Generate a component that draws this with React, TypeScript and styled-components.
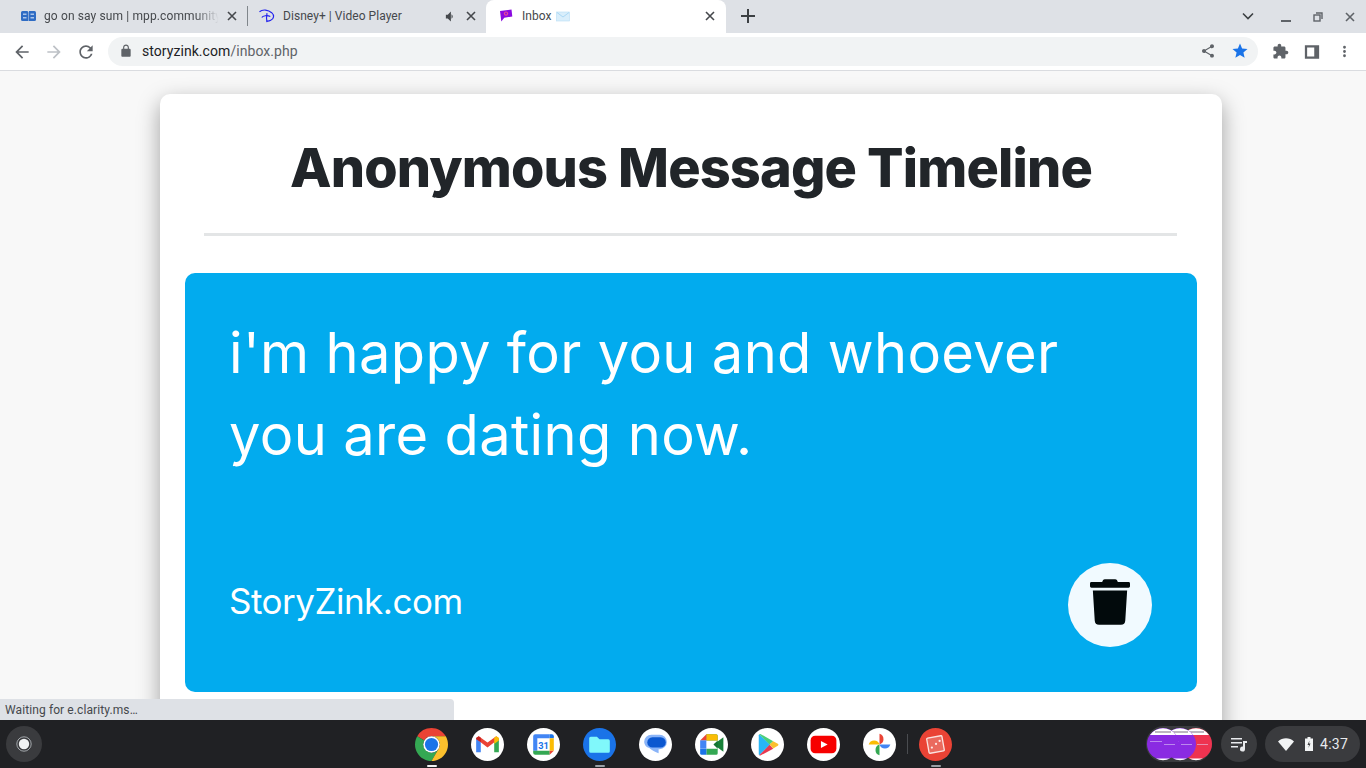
import React from 'react';
import styled, { createGlobalStyle } from 'styled-components';
import { FaTrash } from 'react-icons/fa';

const Global = createGlobalStyle`
  html, body { margin: 0; padding: 0; height: 100%; overflow: hidden; }
  body { font-family: Roboto, "Liberation Sans", sans-serif; background: #f8f8f8; }
  * { box-sizing: border-box; }
`;

const S = {
  Screen: styled.div`
    display: flex;
    flex-direction: column;
    width: 1366px;
    height: 768px;
    overflow: hidden;
  `,
  TabStrip: styled.div`
    display: flex;
    align-items: stretch;
    height: 33px;
    padding-left: 8px;
    background: #dee1e6;
    flex-shrink: 0;
  `,
  Tab: styled.div<{ $width: number; $inset?: number; $active?: boolean; $divider?: boolean }>`
    position: relative;
    display: flex;
    align-items: center;
    width: ${p => p.$width}px;
    padding: 0 8px 1px ${p => p.$inset ?? 12}px;
    border-radius: 8px 8px 0 0;
    background: ${p => (p.$active ? '#fff' : 'transparent')};
    &::after {
      content: '';
      display: ${p => (p.$divider ? 'block' : 'none')};
      position: absolute;
      right: 0;
      top: 6px;
      width: 1px;
      height: 20px;
      background: #80868b;
    }
  `,
  Favicon: styled.span`
    display: flex;
    align-items: center;
    justify-content: center;
    width: 16px;
    height: 16px;
    margin-right: 8px;
    flex-shrink: 0;
  `,
  TabTitle: styled.span<{ $fade?: boolean }>`
    flex: 1;
    min-width: 0;
    display: flex;
    align-items: center;
    gap: 4px;
    overflow: hidden;
    white-space: nowrap;
    font-size: 12px;
    letter-spacing: ${p => (p.$fade ? 0.12 : 0.05)}px;
    color: #45484c;
    ${p => p.$fade && 'mask-image: linear-gradient(to right, #000 84%, transparent 97%);'}
  `,
  TabIcon: styled.span<{ $left?: number; $right?: number }>`
    display: flex;
    align-items: center;
    justify-content: center;
    width: 16px;
    height: 16px;
    margin-left: ${p => p.$left ?? 0}px;
    margin-right: ${p => p.$right ?? 0}px;
    flex-shrink: 0;
  `,
  NewTab: styled.div`
    display: flex;
    align-items: center;
    justify-content: center;
    width: 20px;
    margin-left: 12px;
    padding-bottom: 1px;
  `,
  WindowControls: styled.div`
    margin-left: auto;
    display: flex;
    align-items: center;
    padding-right: 8px;
  `,
  WindowButton: styled.div<{ $gap?: number; $drop?: number }>`
    display: flex;
    align-items: center;
    justify-content: center;
    width: 16px;
    height: 16px;
    margin-left: ${p => p.$gap ?? 16}px;
    transform: translateY(${p => p.$drop ?? 0}px);
  `,
  Toolbar: styled.div`
    display: flex;
    align-items: center;
    height: 38px;
    padding: 0 0 0 12px;
    background: #fff;
    border-bottom: 1px solid #dadce0;
    flex-shrink: 0;
  `,
  NavButton: styled.div`
    display: flex;
    align-items: center;
    justify-content: center;
    width: 20px;
    height: 20px;
    margin-right: 12px;
  `,
  Omnibox: styled.div`
    display: flex;
    align-items: center;
    width: 1150px;
    height: 29px;
    margin: 0 4px 1px 0;
    padding: 0 9px 0 11px;
    border-radius: 15px;
    background: #f1f3f4;
  `,
  Url: styled.div`
    margin-left: 9px;
    font-size: 14px;
    letter-spacing: 0.06px;
    color: #202124;
    flex: 1;
  `,
  UrlPath: styled.span`
    color: #5f6368;
  `,
  OmniIcon: styled.span<{ $gap?: number }>`
    display: flex;
    margin-left: ${p => p.$gap ?? 0}px;
  `,
  ToolIcon: styled.div<{ $gap: number }>`
    display: flex;
    align-items: center;
    justify-content: center;
    width: 18px;
    height: 18px;
    margin-left: ${p => p.$gap}px;
  `,
  Viewport: styled.div`
    position: relative;
    flex: 1;
    min-height: 0;
    overflow: hidden;
    padding: 23px 144px 0 160px;
    background: #f8f8f8;
  `,
  Card: styled.div`
    height: 700px;
    padding: 0 25px;
    border-radius: 10px;
    background: #fff;
    box-shadow: 0 8px 22px rgba(0, 0, 0, 0.36);
  `,
  Title: styled.h1`
    margin: 0;
    height: 139px;
    padding-top: 40px;
    text-align: center;
    font: 800 54px/68px Inter, sans-serif;
    letter-spacing: -0.85px;
    color: #212529;
  `,
  Rule: styled.hr`
    margin: 0 20px 37px 19px;
    height: 3px;
    border: none;
    background: #e3e5e6;
  `,
  Message: styled.div`
    display: flex;
    flex-direction: column;
    height: 419px;
    padding: 39px 45px 0 44px;
    border-radius: 10px;
    background: #02abee;
    color: #fff;
  `,
  MessageText: styled.div`
    height: 251px;
    font: 400 56px/82px Inter, sans-serif;
    letter-spacing: 0.34px;
  `,
  MessageFooter: styled.div`
    display: flex;
    align-items: flex-start;
    justify-content: space-between;
  `,
  Brand: styled.div`
    margin-top: 12px;
    font: 400 35px/52px Inter, sans-serif;
    letter-spacing: -0.5px;
  `,
  DeleteButton: styled.div`
    display: flex;
    align-items: center;
    justify-content: center;
    width: 84px;
    height: 84px;
    padding-bottom: 6px;
    border-radius: 50%;
    background: #f1faff;
    color: #020a0c;
    svg { display: block; width: 40px; height: 46px; }
  `,
  StatusBubble: styled.div`
    position: absolute;
    left: 0;
    bottom: 0;
    width: 454px;
    height: 21px;
    padding: 3px 5px 0;
    border-top-right-radius: 4px;
    background: #dee1e6;
    font-size: 12px;
    letter-spacing: 0.1px;
    line-height: 16px;
    color: #45484c;
  `,
  Shelf: styled.div`
    display: grid;
    grid-template-columns: 1fr auto 1fr;
    align-items: center;
    height: 48px;
    padding: 0 6px;
    background: #202124;
    flex-shrink: 0;
  `,
  Launcher: styled.div`
    display: flex;
    align-items: center;
    justify-content: center;
    width: 36px;
    height: 36px;
    border-radius: 50%;
    background: #3a3b3e;
  `,
  Apps: styled.div`
    display: flex;
    align-items: center;
    gap: 23px;
  `,
  AppSlot: styled.div<{ $dot?: 'on' | 'off' }>`
    position: relative;
    width: 33px;
    height: 33px;
    svg { display: block; }
    &::after {
      content: '';
      display: ${p => (p.$dot ? 'block' : 'none')};
      position: absolute;
      left: 12px;
      top: 37px;
      width: 10px;
      height: 2px;
      border-radius: 1px;
      background: ${p => (p.$dot === 'on' ? '#f1f3f4' : '#9aa0a6')};
    }
  `,
  ShelfDivider: styled.div`
    width: 1px;
    height: 20px;
    margin: 0 -12px;
    background: #4a4c50;
  `,
  Tray: styled.div`
    display: flex;
    align-items: center;
    justify-content: flex-end;
    gap: 8px;
  `,
  TrayRound: styled.div`
    display: flex;
    align-items: center;
    justify-content: center;
    width: 36px;
    height: 36px;
    margin-left: 1px;
    border-radius: 50%;
    background: #3a3b3e;
  `,
  StatusPill: styled.div`
    display: flex;
    align-items: center;
    width: 95px;
    height: 36px;
    padding-left: 13px;
    border-radius: 18px;
    background: #3a3b3e;
    color: #e8eaed;
  `,
  Battery: styled.span`
    display: flex;
    margin-left: 11px;
  `,
  Clock: styled.span`
    margin-left: 7px;
    font-size: 14px;
    letter-spacing: 0.3px;
  `,
};

const Icon = ({ d, size = 18, fill = '#5f6368' }: { d: string; size?: number; fill?: string }) => (
  <svg width={size} height={size} viewBox="0 0 24 24" fill={fill}>
    <path d={d} />
  </svg>
);

const CloseX = ({ size = 10, color = '#45484c' }: { size?: number; color?: string }) => (
  <svg width={size} height={size} viewBox="0 0 10 10" stroke={color} strokeWidth="1.6" fill="none">
    <path d="M1 1l8 8M9 1l-8 8" />
  </svg>
);

const BoardLogo = () => (
  <svg width="15" height="10" viewBox="0 0 15 10">
    <path d="M1.500 0H6a1.500 1.500 0 0 1 1.500 1.500V10H1.500A1.500 1.500 0 0 1 0 8.500v-7A1.500 1.500 0 0 1 1.500 0z" fill="#2f6cc4" />
    <path d="M8 0h5.500A1.500 1.500 0 0 1 15 1.500v7a1.500 1.500 0 0 1-1.500 1.500H8z" fill="#2f6cc4" />
    <rect x="2" y="2.500" width="3.500" height="1.500" fill="#a9c4ea" />
    <rect x="2" y="6" width="3.500" height="1.500" fill="#a9c4ea" />
    <rect x="9.500" y="2.500" width="3.500" height="1.500" fill="#a9c4ea" />
    <rect x="9.500" y="6" width="3.500" height="1.500" fill="#a9c4ea" />
  </svg>
);

const DisneyLogo = () => (
  <svg width="17" height="16" viewBox="0 0 17 16" fill="none" stroke="#2222ee" strokeWidth="1.2">
    <path d="M0.500 3.500C4 0.500 10 1.500 13.500 4.500c3 2.800 2.500 6.500-1 8-2 1-3.500 1-4.500.7" />
    <path d="M8.500 5c-.6 3-.6 6.500 0 9.500" />
    <path d="M3 9.500c1-2 6-2.500 9-1" />
  </svg>
);

const InboxLogo = () => (
  <svg width="16" height="16" viewBox="0 0 16 16">
    <path d="M2 3l11.500-1.500.8 7-8 1.200-3 3.800z" fill="#8a0ae0" />
    <circle cx="8" cy="5.600" r="2.200" fill="#e8489a" />
    <circle cx="8" cy="5.600" r="1" fill="#8a0ae0" />
  </svg>
);

const Envelope = () => (
  <svg width="14" height="12" viewBox="0 0 14 12">
    <rect x="0.500" y="2" width="13" height="9" fill="#d9eefb" stroke="#b7def6" strokeWidth="0.6" />
    <path d="M1 2.500l6 4.500 6-4.500" fill="none" stroke="#9ed2f2" strokeWidth="0.8" />
  </svg>
);

const ChromeLogo = () => (
  <svg width="33" height="33" viewBox="4 4 40 40">
    <path d="M24 4c7.400 0 13.860 4.020 17.320 10H24a10 10 0 0 0-8.660 5L6.680 14A19.980 19.980 0 0 1 24 4z" fill="#ea4335" />
    <path d="M6.680 14A20 20 0 0 0 24 44l8.660-15A10 10 0 0 1 15.340 19z" fill="#34a853" />
    <path d="M24 14h17.320A20 20 0 0 1 24 44l8.660-15A10 10 0 0 0 24 14z" fill="#fbc02d" />
    <circle cx="24" cy="24" r="10" fill="#fff" />
    <circle cx="24" cy="24" r="8" fill="#1a73e8" />
  </svg>
);

const AppDisc = ({ children }: { children: React.ReactNode }) => (
  <svg width="33" height="33" viewBox="0 0 32 32">
    <circle cx="16" cy="16" r="16" fill="#fff" />
    {children}
  </svg>
);

const GmailLogo = () => (
  <AppDisc>
    <path d="M5 10v13.500h4.500V13.500z" fill="#4285f4" />
    <path d="M22.500 13.500v10H27V10z" fill="#34a853" />
    <path d="M5 10.500l11 8.500 11-8.500-2.500-2.500L16 14 7.500 8z" fill="#ea4335" />
    <path d="M22.500 9.500l2-1.500L27 9.500V12l-4.500 3.500z" fill="#fbbc04" />
    <path d="M5 9.500L7.500 8l2 1.500v4L5 11z" fill="#c5221f" />
  </AppDisc>
);

const CalendarLogo = () => (
  <AppDisc>
    <rect x="6" y="6" width="20" height="20" rx="2" fill="#fff" />
    <path d="M6 8a2 2 0 0 1 2-2h14v4H10v12H6z" fill="#4285f4" />
    <path d="M22 6h2a2 2 0 0 1 2 2v2h-4z" fill="#1a73e8" />
    <rect x="22" y="10" width="4" height="12" fill="#fbbc04" />
    <path d="M6 22h16v4H8a2 2 0 0 1-2-2z" fill="#34a853" />
    <path d="M22 22h4l-4 4z" fill="#ea4335" />
    <text x="16" y="20" textAnchor="middle" fontFamily="Roboto, sans-serif" fontWeight="700" fontSize="9" fill="#1a73e8">31</text>
  </AppDisc>
);

const FilesLogo = () => (
  <svg width="33" height="33" viewBox="0 0 32 32">
    <circle cx="16" cy="16" r="16" fill="#1a73e8" />
    <path d="M6 10a1.500 1.500 0 0 1 1.500-1.500h6L16 11h8.500a1.500 1.500 0 0 1 1.500 1.500v10a1.500 1.500 0 0 1-1.500 1.500h-17A1.500 1.500 0 0 1 6 22.500z" fill="#80f8fb" />
  </svg>
);

const MessagesLogo = () => (
  <AppDisc>
    <path d="M12 6.500h8a7 7 0 0 1 7 7 7 7 0 0 1-7 7h-1v4c-3-1-7-3-9-5A7 7 0 0 1 5 13.500a7 7 0 0 1 7-7z" fill="#8ab4f8" />
    <rect x="8" y="9" width="18" height="10" rx="5" fill="#0b57d0" />
  </AppDisc>
);

const MeetLogo = () => (
  <AppDisc>
    <path d="M11 6h9.500a1.500 1.500 0 0 1 1.500 1.500V12h-4v8h4v4.500a1.500 1.500 0 0 1-1.500 1.500H11v-6h7v-8h-7z" fill="#34a853" />
    <path d="M11 6h9.500a1.500 1.500 0 0 1 1.500 1.500V12H11z" fill="#fbbc04" />
    <path d="M11 6v6H5z" fill="#ea4335" />
    <path d="M5 12h6v8H5z" fill="#4285f4" />
    <path d="M5 20h6v6H6.500A1.500 1.500 0 0 1 5 24.500z" fill="#1a73e8" />
    <path d="M18 16l9.500-7v14z" fill="#188038" />
    <path d="M22 12v8l-4-4z" fill="#137333" />
  </AppDisc>
);

const PlayLogo = () => (
  <AppDisc>
    <path d="M8 6l10.500 10L8 26.500a1.500 1.500 0 0 1-.5-1V7a1.500 1.500 0 0 1 .5-1z" fill="#29b6f6" />
    <path d="M8 6c.5-.3 1-.3 1.500 0l12 6.800-3.500 3.300z" fill="#4ccf7a" />
    <path d="M21.500 12.800l4.500 2.500c.8.500.8 1.500 0 2l-4.500 2.500-3.500-3.700z" fill="#fbc02d" />
    <path d="M18 16.300l3.500 3.700-12 6.500c-.5.300-1 .3-1.500 0z" fill="#e8384f" />
  </AppDisc>
);

const YoutubeLogo = () => (
  <AppDisc>
    <rect x="3.500" y="7.500" width="25" height="17" rx="4.500" fill="#f70000" />
    <path d="M13.500 12.500l6.500 3.500-6.500 3.500z" fill="#fff" />
  </AppDisc>
);

const PhotosLogo = () => (
  <AppDisc>
    <path d="M16 16V5.500a5.500 5.500 0 0 1 0 10.500z" fill="#ea4335" />
    <path d="M16 16h10.500a5.500 5.500 0 0 1-10.500 0z" fill="#4285f4" />
    <path d="M16 16v10.500a5.500 5.500 0 0 1 0-10.500z" fill="#34a853" />
    <path d="M16 16H5.500a5.500 5.500 0 0 1 10.500 0z" fill="#fbbc04" />
  </AppDisc>
);

const DiceLogo = () => (
  <svg width="33" height="33" viewBox="0 0 32 32">
    <circle cx="16" cy="16" r="16" fill="#ea4335" />
    <rect x="8.500" y="8.500" width="15" height="15" rx="1" fill="#ea6a5e" stroke="#fbe3e0" strokeWidth="1.300" transform="rotate(-10 16 16)" />
    <circle cx="12.500" cy="19" r="1.100" fill="#fde9e7" />
    <circle cx="16.500" cy="15.500" r="1.100" fill="#fde9e7" />
    <circle cx="20" cy="12.500" r="1.100" fill="#fde9e7" />
  </svg>
);

const ThumbCircle = ({ cx, color }: { cx: number; color: string }) => (
  <g>
    <circle cx={cx} cy="18" r="16" fill={color} />
    <path d={`M${cx - 13} 9a16 16 0 0 1 26 0z`} fill="#fff" />
    <path d={`M${cx - 7} 32.500a16 16 0 0 0 14 0z`} fill="#fff" />
    <rect x={cx - 8} y="5.500" width="16" height="1" fill="#44304f" opacity="0.7" />
    <rect x={cx - 13} y="15" width="12" height="1" fill="#e4d5f8" opacity="0.55" />
    <rect x={cx + 1} y="18" width="11" height="1" fill="#e4d5f8" opacity="0.55" />
  </g>
);

const ThumbStack = () => (
  <svg width="66" height="36" viewBox="0 0 66 36">
    <rect x="0" y="0" width="66" height="36" rx="18" fill="#3a3b3e" />
    <ThumbCircle cx={50} color="#ee3350" />
    <ThumbCircle cx={34} color="#8a2be2" />
    <ThumbCircle cx={17} color="#8a2be2" />
  </svg>
);

const PATHS = {
  back: 'M20 11H7.830l5.590-5.590L12 4l-8 8 8 8 1.410-1.410L7.830 13H20v-2z',
  forward: 'M4 11h12.170l-5.590-5.590L12 4l8 8-8 8-1.410-1.410L16.170 13H4v-2z',
  reload: 'M17.650 6.350A7.958 7.958 0 0 0 12 4c-4.420 0-7.990 3.580-7.990 8s3.570 8 7.990 8c3.730 0 6.840-2.550 7.730-6h-2.080A5.990 5.990 0 0 1 12 18c-3.310 0-6-2.690-6-6s2.690-6 6-6c1.660 0 3.140.690 4.220 1.780L13 11h7V4l-2.350 2.350z',
  lock: 'M18 8h-1V6c0-2.760-2.240-5-5-5S7 3.240 7 6v2H6c-1.100 0-2 .9-2 2v10c0 1.100.9 2 2 2h12c1.100 0 2-.9 2-2V10c0-1.100-.9-2-2-2zM9 6c0-1.660 1.340-3 3-3s3 1.340 3 3v2H9V6z',
  share: 'M18 16.080c-.76 0-1.440.3-1.960.77L8.910 12.700c.05-.23.09-.46.09-.7s-.04-.47-.09-.7l7.050-4.110c.54.5 1.250.81 2.040.81 1.660 0 3-1.340 3-3s-1.340-3-3-3-3 1.340-3 3c0 .24.04.47.09.7L8.040 9.810C7.500 9.310 6.790 9 6 9c-1.660 0-3 1.340-3 3s1.340 3 3 3c.79 0 1.500-.31 2.040-.81l7.120 4.160c-.05.21-.08.43-.08.65 0 1.610 1.310 2.920 2.920 2.920 1.610 0 2.920-1.310 2.920-2.920s-1.310-2.920-2.920-2.920z',
  star: 'M12 17.270L18.180 21l-1.640-7.030L22 9.240l-7.190-.61L12 2 9.190 8.630 2 9.240l5.460 4.730L5.820 21z',
  extension: 'M20.500 11H19V7c0-1.100-.9-2-2-2h-4V3.500C13 2.120 11.880 1 10.500 1S8 2.120 8 3.500V5H4c-1.100 0-1.990.9-1.990 2v3.800H3.500c1.490 0 2.700 1.210 2.700 2.700s-1.210 2.700-2.700 2.700H2V20c0 1.100.9 2 2 2h3.800v-1.500c0-1.490 1.210-2.700 2.700-2.700 1.490 0 2.700 1.210 2.700 2.700V22H17c1.100 0 2-.9 2-2v-4h1.500c1.380 0 2.500-1.120 2.500-2.500S21.880 11 20.500 11z',
  panel: 'M2.500 3h19v18h-19zM15 6H5.500v12H15z',
  dots: 'M12 8a2 2 0 1 0 0-4 2 2 0 0 0 0 4zm0 6a2 2 0 1 0 0-4 2 2 0 0 0 0 4zm0 6a2 2 0 1 0 0-4 2 2 0 0 0 0 4z',
  speaker: 'M3 9v6h3l5 5V4L6 9H3zm11 3a4.500 4.500 0 0 0-2-3.740v7.480A4.500 4.500 0 0 0 14 12z',
};

export default function App() {
  return (
    <S.Screen>
      <Global />
      <S.TabStrip>
        <S.Tab $width={240} $divider>
          <S.Favicon><BoardLogo /></S.Favicon>
          <S.TabTitle $fade>go on say sum | mpp.community</S.TabTitle>
          <S.TabIcon><CloseX /></S.TabIcon>
        </S.Tab>
        <S.Tab $width={238} $inset={11}>
          <S.Favicon><DisneyLogo /></S.Favicon>
          <S.TabTitle>Disney+ | Video Player</S.TabTitle>
          <S.TabIcon $right={4}><Icon d={PATHS.speaker} size={15} fill="#45484c" /></S.TabIcon>
          <S.TabIcon $right={-1}><CloseX /></S.TabIcon>
        </S.Tab>
        <S.Tab $width={240} $active>
          <S.Favicon><InboxLogo /></S.Favicon>
          <S.TabTitle>Inbox <Envelope /></S.TabTitle>
          <S.TabIcon><CloseX /></S.TabIcon>
        </S.Tab>
        <S.NewTab>
          <svg width="14" height="14" viewBox="0 0 14 14" stroke="#3c4043" strokeWidth="2"><path d="M7 0v14M0 7h14" /></svg>
        </S.NewTab>
        <S.WindowControls>
          <S.WindowButton $drop={-1}>
            <svg width="12" height="8" viewBox="0 0 12 8" fill="none" stroke="#3c4043" strokeWidth="1.600"><path d="M1 1.500l5 5 5-5" /></svg>
          </S.WindowButton>
          <S.WindowButton $gap={22} $drop={4}>
            <svg width="10" height="2" viewBox="0 0 10 2"><rect width="10" height="2" fill="#5f6368" /></svg>
          </S.WindowButton>
          <S.WindowButton>
            <svg width="10" height="10" viewBox="0 0 10 10" fill="none" stroke="#5f6368" strokeWidth="1.400"><path d="M3 1h6v6" /><rect x="1" y="3" width="6" height="6" /></svg>
          </S.WindowButton>
          <S.WindowButton>
            <CloseX size={10} color="#5f6368" />
          </S.WindowButton>
        </S.WindowControls>
      </S.TabStrip>

      <S.Toolbar>
        <S.NavButton><Icon d={PATHS.back} size={20} /></S.NavButton>
        <S.NavButton><Icon d={PATHS.forward} size={20} fill="#bdc1c6" /></S.NavButton>
        <S.NavButton><Icon d={PATHS.reload} size={20} /></S.NavButton>
        <S.Omnibox>
          <Icon d={PATHS.lock} size={14} />
          <S.Url>storyzink.com<S.UrlPath>/inbox.php</S.UrlPath></S.Url>
          <S.OmniIcon><Icon d={PATHS.share} size={16} /></S.OmniIcon>
          <S.OmniIcon $gap={15}><Icon d={PATHS.star} size={18} fill="#1a73e8" /></S.OmniIcon>
        </S.Omnibox>
        <S.ToolIcon $gap={9}><Icon d={PATHS.extension} size={17} /></S.ToolIcon>
        <S.ToolIcon $gap={14}><Icon d={PATHS.panel} size={18} /></S.ToolIcon>
        <S.ToolIcon $gap={14}><Icon d={PATHS.dots} size={17} /></S.ToolIcon>
      </S.Toolbar>

      <S.Viewport>
        <S.Card>
          <S.Title>Anonymous Message Timeline</S.Title>
          <S.Rule />
          <S.Message>
            <S.MessageText>i'm happy for you and whoever you are dating now.</S.MessageText>
            <S.MessageFooter>
              <S.Brand>StoryZink.com</S.Brand>
              <S.DeleteButton><FaTrash /></S.DeleteButton>
            </S.MessageFooter>
          </S.Message>
        </S.Card>
        <S.StatusBubble>Waiting for e.clarity.ms…</S.StatusBubble>
      </S.Viewport>

      <S.Shelf>
        <S.Launcher>
          <svg width="16" height="16" viewBox="0 0 16 16">
            <circle cx="8" cy="8" r="7.200" fill="none" stroke="#bdc1c6" strokeWidth="0.800" />
            <circle cx="8" cy="8" r="5.200" fill="#f1f3f4" />
          </svg>
        </S.Launcher>
        <S.Apps>
          <S.AppSlot $dot="on"><ChromeLogo /></S.AppSlot>
          <S.AppSlot><GmailLogo /></S.AppSlot>
          <S.AppSlot><CalendarLogo /></S.AppSlot>
          <S.AppSlot $dot="off"><FilesLogo /></S.AppSlot>
          <S.AppSlot><MessagesLogo /></S.AppSlot>
          <S.AppSlot><MeetLogo /></S.AppSlot>
          <S.AppSlot><PlayLogo /></S.AppSlot>
          <S.AppSlot><YoutubeLogo /></S.AppSlot>
          <S.AppSlot><PhotosLogo /></S.AppSlot>
          <S.ShelfDivider />
          <S.AppSlot $dot="off"><DiceLogo /></S.AppSlot>
        </S.Apps>
        <S.Tray>
          <ThumbStack />
          <S.TrayRound>
            <svg width="18" height="16" viewBox="0 0 18 16" fill="#e8eaed">
              <path d="M1 2h11v1.500H1zM1 6h11v1.500H1zM1 10h7v1.500H1z" />
              <path d="M13 5h4v2h-2v6a2.500 2.500 0 1 1-2-2.400z" />
            </svg>
          </S.TrayRound>
          <S.StatusPill>
            <svg width="16" height="13" viewBox="0 0 16 13" fill="#f1f3f4"><path d="M0 3.500C4.500-.8 11.500-.8 16 3.500L8 13z" /></svg>
            <S.Battery>
              <svg width="8" height="14" viewBox="0 0 8 14">
                <path d="M2.500 0h3v1.500H8V14H0V1.500h2.500z" fill="#f1f3f4" />
                <path d="M4.500 3.500L2.500 8H4l-.5 3 2-4.500H4z" fill="#3a3b3e" />
              </svg>
            </S.Battery>
            <S.Clock>4:37</S.Clock>
          </S.StatusPill>
        </S.Tray>
      </S.Shelf>
    </S.Screen>
  );
}
